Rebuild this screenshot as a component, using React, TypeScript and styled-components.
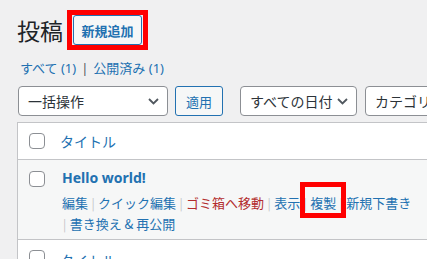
import React from 'react';
import styled, { createGlobalStyle } from 'styled-components';

const GlobalStyle = createGlobalStyle`
    html, body {
        margin: 0;
        padding: 0;
        background: #f0f0f1;
        overflow: hidden;
    }
    body {
        font-family: "Noto Sans", "Noto Sans CJK JP", sans-serif;
        color: #3c434a;
    }
`;

const Wrap = styled.div`
    padding: 10px 0 0 18px;
    width: 500px;
`;

const TitleRow = styled.div`
    display: flex;
    align-items: center;
    height: 40px;
`;

const PageTitle = styled.h1`
    margin: 0 4px 0 -1px;
    font-size: 23px;
    font-weight: 400;
    color: #1d2327;
    font-family: "Noto Sans CJK JP", sans-serif;
    line-height: 30px;
`;

// annotation frame drawn round the highlighted control
const Highlight = styled.span`
    display: inline-flex;
    border: 5px solid #ff0000;
    padding: 0 1px;
`;

const AddButton = styled.button`
    box-sizing: border-box;
    width: 69px;
    height: 30px;
    padding: 0;
    border: 1px solid #2271b1;
    border-radius: 3px;
    background: #f6f7f7;
    color: #2271b1;
    font-family: "Noto Sans CJK JP", sans-serif;
    font-size: 13px;
    font-weight: 700;
`;

const Views = styled.div`
    margin-top: 9px;
    padding-left: 2px;
    font-size: 13px;
    line-height: 18px;
    color: #2271b1;
    display: flex;
    gap: 5px;
`;

const ViewSep = styled.span`
    color: #50575e;
`;

const Filters = styled.div`
    margin-top: 9px;
    display: flex;
    align-items: center;
`;

const Select = styled.div<{ $w: number; $gap: number }>`
    box-sizing: border-box;
    width: ${p => p.$w}px;
    margin-left: ${p => p.$gap}px;
    height: 30px;
    border: 1px solid #8c8f94;
    border-radius: 4px;
    background: #fff;
    display: flex;
    align-items: center;
    justify-content: space-between;
    padding: 0 8px 0 9px;
    font-family: "Noto Sans CJK JP", sans-serif;
    font-size: 14px;
    color: #2c3338;
    flex-shrink: 0;
    &:first-child { margin-left: 0; }
`;

const ApplyButton = styled.button`
    box-sizing: border-box;
    width: 48px;
    height: 30px;
    margin-left: 7px;
    border: 1px solid #2271b1;
    border-radius: 3px;
    background: #f6f7f7;
    color: #2271b1;
    font-family: "Noto Sans CJK JP", sans-serif;
    font-size: 13px;
    padding: 0;
    flex-shrink: 0;
`;

const Table = styled.div`
    margin: 6px 0 0 -1px;
    border: 1px solid #c3c4c7;
    background: #fff;
    width: 480px;
`;

const HeadRow = styled.div`
    display: flex;
    align-items: center;
    height: 36px;
    padding-left: 11px;
    border-bottom: 1px solid #c3c4c7;
`;

const FootRow = styled(HeadRow)`
    border-bottom: none;
    align-items: flex-start;
    padding-top: 10px;
`;

const Check = styled.span`
    box-sizing: border-box;
    width: 16px;
    height: 16px;
    border: 1px solid #8c8f94;
    border-radius: 4px;
    background: #fff;
    flex-shrink: 0;
`;

const ColTitle = styled.span`
    margin-left: 15px;
    font-family: "Noto Sans CJK JP", sans-serif;
    font-size: 14px;
    color: #2271b1;
`;

const PostRow = styled.div`
    display: flex;
    align-items: flex-start;
    background: #f6f7f7;
    height: 80px;
    box-sizing: border-box;
    padding: 11px 0 0 11px;
    border-bottom: 1px solid #c3c4c7;
`;

const PostBody = styled.div`
    margin: -3px 0 0 17px;
`;

const PostTitle = styled.div`
    font-size: 14px;
    font-weight: 700;
    line-height: 20px;
    color: #2271b1;
`;

const Actions = styled.div`
    margin-top: 4px;
`;

const ActionLine = styled.div`
    display: flex;
    align-items: center;
    font-family: "Noto Sans CJK JP", sans-serif;
    font-size: 13px;
    line-height: 21px;
    white-space: nowrap;
`;

const ActionLink = styled.span<{ $danger?: boolean }>`
    color: ${p => (p.$danger ? '#b32d2e' : '#2271b1')};
`;

const Sep = styled.span<{ $lead?: boolean }>`
    color: #c3c4c7;
    margin: 0 3.4px 0 ${p => (p.$lead ? 1 : 3.4)}px;
    font-size: 12px;
`;

// red annotation frame on top of the "複製" link
const Marked = styled.span`
    position: relative;
    &::after {
        content: '';
        position: absolute;
        left: -10px;
        right: -10px;
        top: -10px;
        bottom: -5px;
        border: 5px solid #ff0000;
    }
`;

const Chevron = () => (
    <svg width="11" height="7" viewBox="0 0 11 7">
        <path d="M1 1l4.5 4.5L10 1" fill="none" stroke="#50575e" strokeWidth="1.8" />
    </svg>
);

export default function App() {
    return (
        <Wrap>
            <GlobalStyle />
            <TitleRow>
                <PageTitle>投稿</PageTitle>
                <Highlight>
                    <AddButton>新規追加</AddButton>
                </Highlight>
            </TitleRow>
            <Views>
                <span>すべて (1)</span>
                <ViewSep>|</ViewSep>
                <span>公開済み (1)</span>
            </Views>
            <Filters>
                <Select $w={150} $gap={0}>
                    一括操作
                    <Chevron />
                </Select>
                <ApplyButton>適用</ApplyButton>
                <Select $w={117} $gap={17}>
                    すべての日付
                    <Chevron />
                </Select>
                <Select $w={140} $gap={8}>
                    カテゴリー一覧
                    <Chevron />
                </Select>
            </Filters>
            <Table>
                <HeadRow>
                    <Check />
                    <ColTitle>タイトル</ColTitle>
                </HeadRow>
                <PostRow>
                    <Check />
                    <PostBody>
                        <PostTitle>Hello world!</PostTitle>
                        <Actions>
                            <ActionLine>
                                <ActionLink>編集</ActionLink>
                                <Sep>|</Sep>
                                <ActionLink>クイック編集</ActionLink>
                                <Sep>|</Sep>
                                <ActionLink $danger>ゴミ箱へ移動</ActionLink>
                                <Sep>|</Sep>
                                <ActionLink>表示</ActionLink>
                                <Sep>|</Sep>
                                <Marked>
                                    <ActionLink>複製</ActionLink>
                                </Marked>
                                <Sep>|</Sep>
                                <ActionLink>新規下書き</ActionLink>
                            </ActionLine>
                            <ActionLine>
                                <Sep $lead>|</Sep>
                                <ActionLink>書き換え &amp; 再公開</ActionLink>
                            </ActionLine>
                        </Actions>
                    </PostBody>
                </PostRow>
                <FootRow>
                    <Check />
                    <ColTitle>タイトル</ColTitle>
                </FootRow>
            </Table>
        </Wrap>
    );
}
